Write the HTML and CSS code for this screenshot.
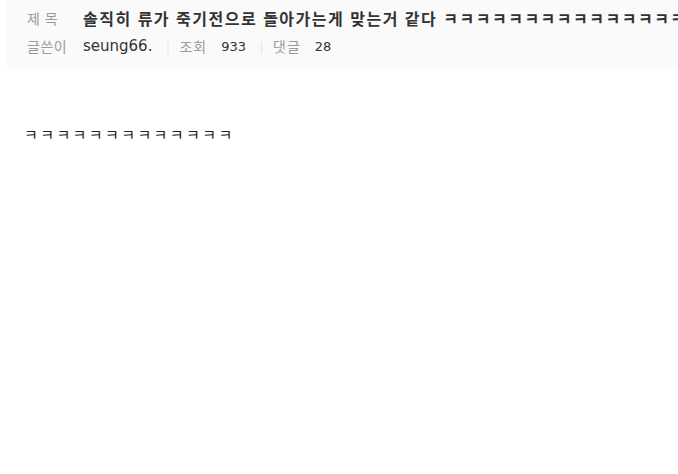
FILE: index.html
```html
<!DOCTYPE html>
<html lang="ko">
<head>
    <meta charset="UTF-8">
    <meta name="viewport" content="width=device-width, initial-scale=1.0">
    <title>게시글</title>
    <link rel="stylesheet" href="styles.css">
</head>
<body>
    <div class="post-head">
        <div class="row subject">
            <span class="label">제 목</span>
            <span class="title">솔직히 류가 죽기전으로 돌아가는게 맞는거 같다 ㅋㅋㅋㅋㅋㅋㅋㅋㅋㅋㅋㅋㅋㅋㅋ</span>
        </div>
        <div class="row info">
            <span class="label">글쓴이</span>
            <span class="writer">seung66.</span>
            <span class="bar">|</span>
            <span class="key">조회</span>
            <span class="num">933</span>
            <span class="bar">|</span>
            <span class="key">댓글</span>
            <span class="num">28</span>
        </div>
    </div>
    <div class="post-body">ㅋㅋㅋㅋㅋㅋㅋㅋㅋㅋㅋㅋㅋ</div>
</body>
</html>
```

FILE: styles.css
```css
body {
    margin: 0;
    background: #fff;
    font-family: "Noto Sans CJK KR", "Noto Sans", sans-serif;
    color: #333;
    overflow: hidden;
}
.post-head {
    margin-left: 7px;
    width: 720px;
    height: 69px;
    background: #fafafa;
    padding: 6px 0 0 20px;
    box-sizing: border-box;
}
.row {
    display: flex;
    align-items: center;
    white-space: nowrap;
}
.subject {
    height: 24px;
}
.info {
    margin-top: 4px;
    height: 24px;
    font-size: 14px;
}
.label {
    width: 56px;
    color: #999;
    font-size: 14px;
    letter-spacing: 0.5px;
}
.title {
    font-size: 16px;
    font-weight: bold;
    letter-spacing: 1.5px;
    color: #333;
}
.writer {
    font-family: "DejaVu Sans", "Noto Sans CJK KR", sans-serif;
    font-size: 15px;
    color: #333;
}
.bar {
    color: #ddd;
    font-size: 11px;
    margin: 0 10px 0 14px;
}
.key {
    color: #999;
    letter-spacing: 1px;
    margin-right: 14px;
}
.num {
    font-family: "DejaVu Sans", sans-serif;
    font-size: 13px;
    color: #333;
}
.post-body {
    margin: 54px 0 0 24px;
    font-size: 15px;
    letter-spacing: 2.4px;
    color: #222;
}
```
